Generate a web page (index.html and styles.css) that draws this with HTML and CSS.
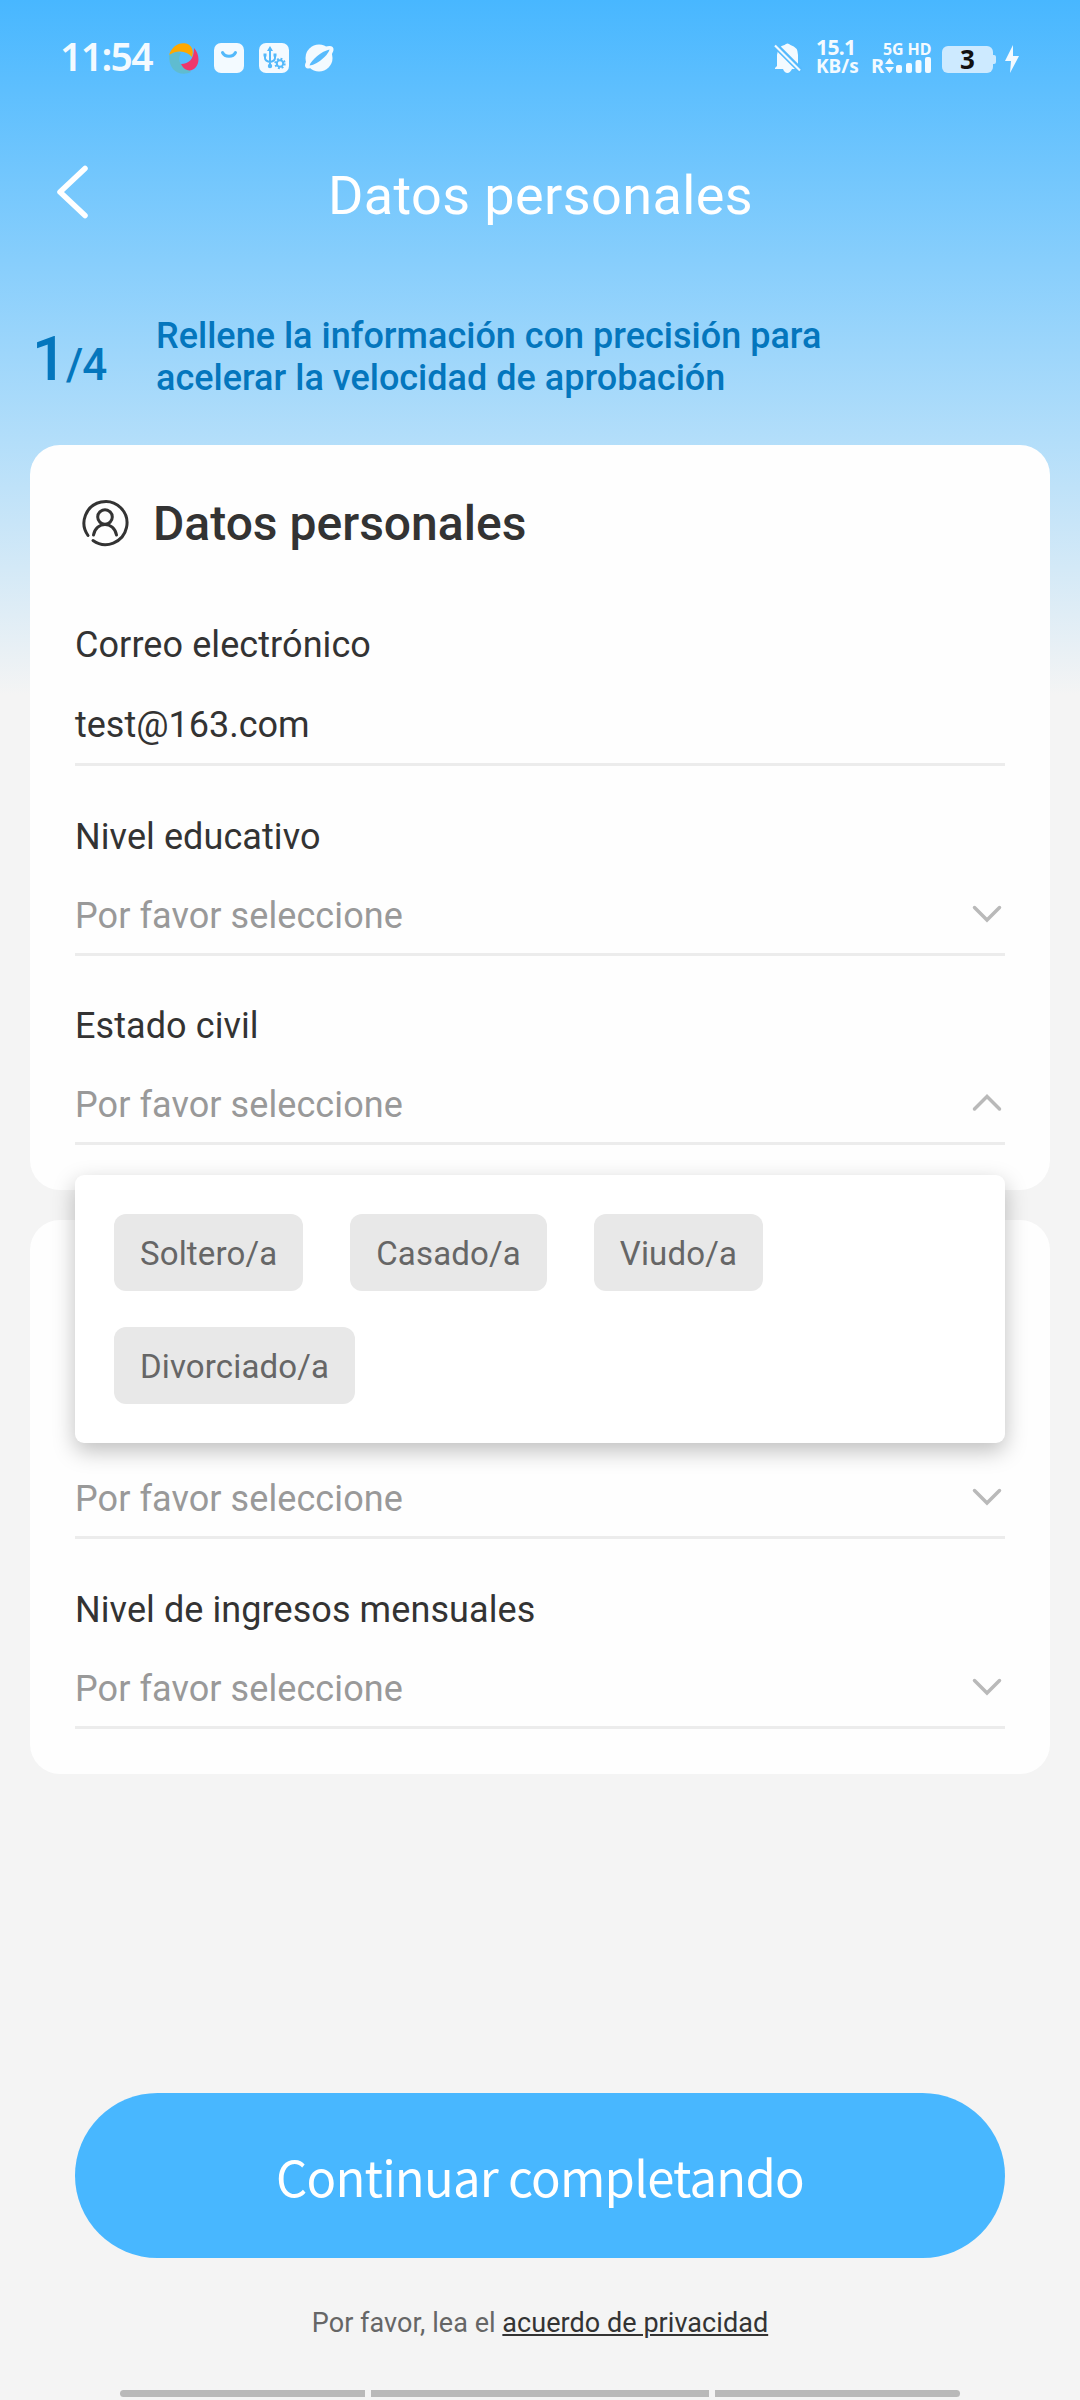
FILE: index.html
```html
<!DOCTYPE html>
<html lang="es">
<head>
<meta charset="utf-8">
<title>Datos personales</title>
<link rel="stylesheet" href="styles.css">
</head>
<body>
<div class="screen">
  <div class="status">
    <span class="clock">11:54</span>
    <div class="apps">
      <svg width="30" height="31" viewBox="0 0 30 31"><path fill="#5fbcd0" d="M0 12C3 9 8 8 12 10C9 15 10 21 14 23C18 25 21 27 22 29C16 32 8 31 4 26C1 22 0 18 0 12Z"/><path fill="#f0376c" d="M25 5C30 10 31 19 27 24C23 29 16 29 12 21C20 21 25 16 25 5Z"/><path fill="#ffa800" d="M0 12C3 3 10-1 17 .5C23 2 25 8 23 14C18 8 9 6 0 12Z"/></svg>
      <svg width="30" height="30" viewBox="0 0 30 30"><rect width="30" height="30" rx="7" fill="#f3faff"/><path d="M8.500 9.500a7 6 0 0 0 13 0" fill="none" stroke="#53b9fb" stroke-width="3" stroke-linecap="round"/></svg>
      <svg width="30" height="30" viewBox="0 0 30 30"><rect width="30" height="30" rx="7" fill="#f3faff"/><g fill="none" stroke="#53b9fb" stroke-width="2"><path d="M11 6V24M6 12V15Q6 18 11 19M16 12V15Q16 18 11 19"/><circle cx="21" cy="20.500" r="3.200"/><circle cx="21" cy="20.500" r="4.700" stroke-dasharray="1.850 1.840"/></g><path fill="#53b9fb" d="M11 3l3 5H8zM4.500 10.500h3v3h-3zM14.500 10.500h3v3h-3z"/><circle cx="11" cy="23" r="2.200" fill="#53b9fb"/></svg>
      <svg width="30" height="28" viewBox="0 0 30 28"><circle cx="15" cy="14" r="13.500" fill="#f3faff"/><path d="M4 15C0 20 0 24 4 24.500C7 24.500 9 23 9 23L4.500 20ZM21 3C26 1 30 2 29.500 6C29 9 26 13 26 13L25 6Z" fill="#f3faff"/><path d="M5.500 21.500C7 16 18 7 25.500 5.500C24 12 12 21 5.500 21.500Z" fill="#58bbfd"/></svg>
    </div>
    <svg class="bell" width="28" height="31" viewBox="0 0 28 31"><path fill="#f3faff" d="M3 23V12Q4 3 10.500 2Q13.500-1 16.500 2Q24 4 24 12V23L26 25V26H18Q16 30 13.500 30Q10.500 30 9 26H1V25Z"/><path d="M0 1L27 28" stroke="#55bafd" stroke-width="6"/><path d="M1 2.500L26 27.500" stroke="#f3faff" stroke-width="2.200"/></svg>
    <div class="speed"><span>15.1</span><span class="unit">KB/s</span></div>
    <div class="signal">
      <span class="net">5G HD</span>
      <div class="bars"><span class="roam">R</span><svg width="48" height="17" viewBox="0 0 48 17" fill="#f3faff"><path d="M5.500 1L10 7H1ZM5.500 16L10 10H1Z"/><rect x="12" y="8" width="6" height="8" rx="2"/><rect x="22" y="6" width="6" height="10" rx="2"/><rect x="31.500" y="3" width="6" height="13" rx="2"/><rect x="41" y="0" width="6" height="16" rx="2"/></svg></div>
    </div>
    <div class="battery">3</div>
    <svg class="bolt" width="14" height="28" viewBox="0 0 14 28"><path fill="#f3faff" d="M8 0L0 16H6L5 28L14 11H8Z"/></svg>
  </div>

  <div class="nav">
    <svg width="34" height="56" viewBox="0 0 34 56"><path d="M30 5.500L5 29L30 52.500" fill="none" stroke="#fff" stroke-width="5.500" stroke-linecap="round" stroke-linejoin="round"/></svg>
    <h1 class="title">Datos personales</h1>
  </div>

  <div class="step">
    <div class="count"><span class="now">1</span><span class="total">/4</span></div>
    <p class="hint">Rellene la información con precisión para<br>acelerar la velocidad de aprobación</p>
  </div>

  <section class="card first">
    <h2 class="heading"><svg width="48" height="48" viewBox="0 0 48 48" fill="none" stroke="#333" stroke-width="3" stroke-linecap="round"><path d="M7 36.500A21.500 21.500 0 1 1 12 41.500"/><circle cx="24" cy="18" r="7.300"/><path d="M12.500 36C15 22 33 22 35.500 36"/></svg>Datos personales</h2>
    <div class="field"><label class="label">Correo electrónico</label><div class="value filled">test@163.com</div></div>
    <div class="field"><label class="label">Nivel educativo</label><div class="value">Por favor seleccione<svg class="arrow" width="30" height="18" viewBox="0 0 30 18"><path d="M2.500 2.500L15 15L27.500 2.500"/></svg></div></div>
    <div class="field civil"><label class="label">Estado civil</label><div class="value">Por favor seleccione<svg class="arrow" width="30" height="18" viewBox="0 0 30 18"><path d="M2.500 15L15 2.500L27.500 15"/></svg></div>
      <div class="popup"><span class="chip">Soltero/a</span><span class="chip">Casado/a</span><span class="chip">Viudo/a</span><span class="chip">Divorciado/a</span></div>
    </div>
  </section>

  <section class="card last">
    <div class="field"><div class="value">Por favor seleccione<svg class="arrow" width="30" height="18" viewBox="0 0 30 18"><path d="M2.500 2.500L15 15L27.500 2.500"/></svg></div></div>
    <div class="field"><label class="label">Nivel de ingresos mensuales</label><div class="value">Por favor seleccione<svg class="arrow" width="30" height="18" viewBox="0 0 30 18"><path d="M2.500 2.500L15 15L27.500 2.500"/></svg></div></div>
  </section>

  <footer class="footer">
    <button class="button">Continuar completando</button>
    <p class="privacy">Por favor, lea el <a class="link">acuerdo de privacidad</a></p>
    <div class="gestures"><i class="side"></i><i class="middle"></i><i class="side right"></i></div>
  </footer>
</div>
</body>
</html>
```
FILE: styles.css
```css
* { box-sizing: border-box; }
body { margin: 0; font-family: Roboto, sans-serif; color: #333; }
h1, h2, p { margin: 0; font-weight: 400; }
svg { display: block; flex: none; }
.screen { width: 1080px; height: 2400px; overflow: hidden; display: flex; flex-direction: column; background: #f4f4f4 linear-gradient(#48b7ff 0, #b3defa 442px, #f4f4f4 695px) no-repeat; }

.status { height: 116px; flex: none; padding-left: 60px; display: flex; align-items: center; color: #f3faff; font-family: "Noto Sans", sans-serif; font-weight: 700; }
.clock { width: 109px; margin-top: -5px; font-size: 39px; font-weight: 600; line-height: 48px; letter-spacing: -1.6px; white-space: nowrap; }
.apps { width: 605px; display: flex; align-items: center; gap: 15px; }
.bell { margin-right: 14px; }
.speed { width: 55px; margin-top: -2px; display: flex; flex-direction: column; font-size: 21px; line-height: 19px; letter-spacing: -0.6px; white-space: nowrap; }
.unit { font-size: 19px; letter-spacing: 0; }
.signal { width: 71px; display: flex; flex-direction: column; }
.net { font-size: 16px; line-height: 15px; padding-left: 12px; letter-spacing: -0.1px; white-space: nowrap; }
.bars { display: flex; align-items: flex-end; }
.roam { width: 13px; font-size: 20px; line-height: 17px; }
.battery { width: 51px; height: 27px; margin-top: 3px; border-radius: 6px; background: #cdeaff; color: #111; font-size: 26px; line-height: 27px; text-align: center; position: relative; }
.battery::after { content: ""; position: absolute; left: 51px; top: 9px; width: 3px; height: 9px; background: #cdeaff; border-radius: 0 2px 2px 0; }
.bolt { margin-left: 12px; margin-top: 2px; }

.nav { height: 154px; flex: none; padding: 47px 0 0 55px; display: flex; align-items: flex-start; }
.title { flex: 1; margin-right: 88px; padding-top: 1px; text-align: center; color: #fff; font-size: 54px; line-height: 64px; letter-spacing: 0.4px; }

.step { height: 175px; flex: none; padding: 45px 0 0 32px; display: flex; color: #0476bd; font-weight: 500; }
.count { width: 124px; letter-spacing: -0.8px; }
.now { font-size: 61px; line-height: 89px; }
.total { font-size: 44px; }
.hint { font-weight: 500; font-size: 36px; line-height: 42px; letter-spacing: 0.01px; }

.card { width: 1020px; margin: 0 auto; flex: none; border-radius: 30px; background: #fefefe; padding: 0 45px; }
.first { height: 745px; position: relative; z-index: 1; }
.heading { height: 156px; padding-left: 6px; display: flex; align-items: center; gap: 24px; font-size: 48px; font-weight: 500; }
.field { position: relative; }
.field + .field { margin-top: 25px; }
.field + .civil { margin-top: 24px; }
.label { display: block; height: 86px; padding-top: 23px; font-size: 36px; line-height: 42px; letter-spacing: 0.08px; }
.field + .field .label { padding-top: 25px; }
.value { height: 79px; padding-top: 1px; display: flex; justify-content: space-between; align-items: center; font-size: 36px; letter-spacing: 0.08px; color: #999; border-bottom: 3px solid #ececec; }
.filled { color: #333; padding: 0 0 1px; letter-spacing: 0; }
.arrow { margin: 0 3px 3px 0; fill: none; stroke: #b9b9b9; stroke-width: 3.500px; stroke-linecap: round; }
.popup { position: absolute; left: 0; top: 195px; width: 930px; height: 268px; padding: 39px; border-radius: 9px; background: #fff; box-shadow: 0 8px 22px rgba(0,0,0,.25); display: flex; flex-wrap: wrap; align-content: flex-start; gap: 36px 47px; }
.chip { height: 77px; padding: 0 26px; border-radius: 12px; background: #e8e8e8; color: #666; font-size: 33px; line-height: 80px; letter-spacing: 0.14px; }
.last { height: 554px; margin-top: 30px; padding-top: 240px; }

.footer { flex: 1; padding: 319px 75px 0; display: flex; flex-direction: column; align-items: center; }
.button { width: 930px; height: 165px; border: 0; border-radius: 83px; background: #48b7ff; color: #fff; font: 400 49px "Noto Sans CJK SC", sans-serif; letter-spacing: -0.8px; padding: 0; }
.privacy { margin-top: 43px; font-size: 27px; line-height: 44px; letter-spacing: 0.05px; color: #666; }
.link { color: #333; text-decoration: underline; }
.gestures { margin-top: 45px; width: 840px; display: flex; gap: 6px; }
.gestures i { height: 7px; background: #b9b9b9; }
.side { width: 245px; border-radius: 4px 0 0 4px; }
.right { border-radius: 0 4px 4px 0; }
.middle { flex: 1; }
```
